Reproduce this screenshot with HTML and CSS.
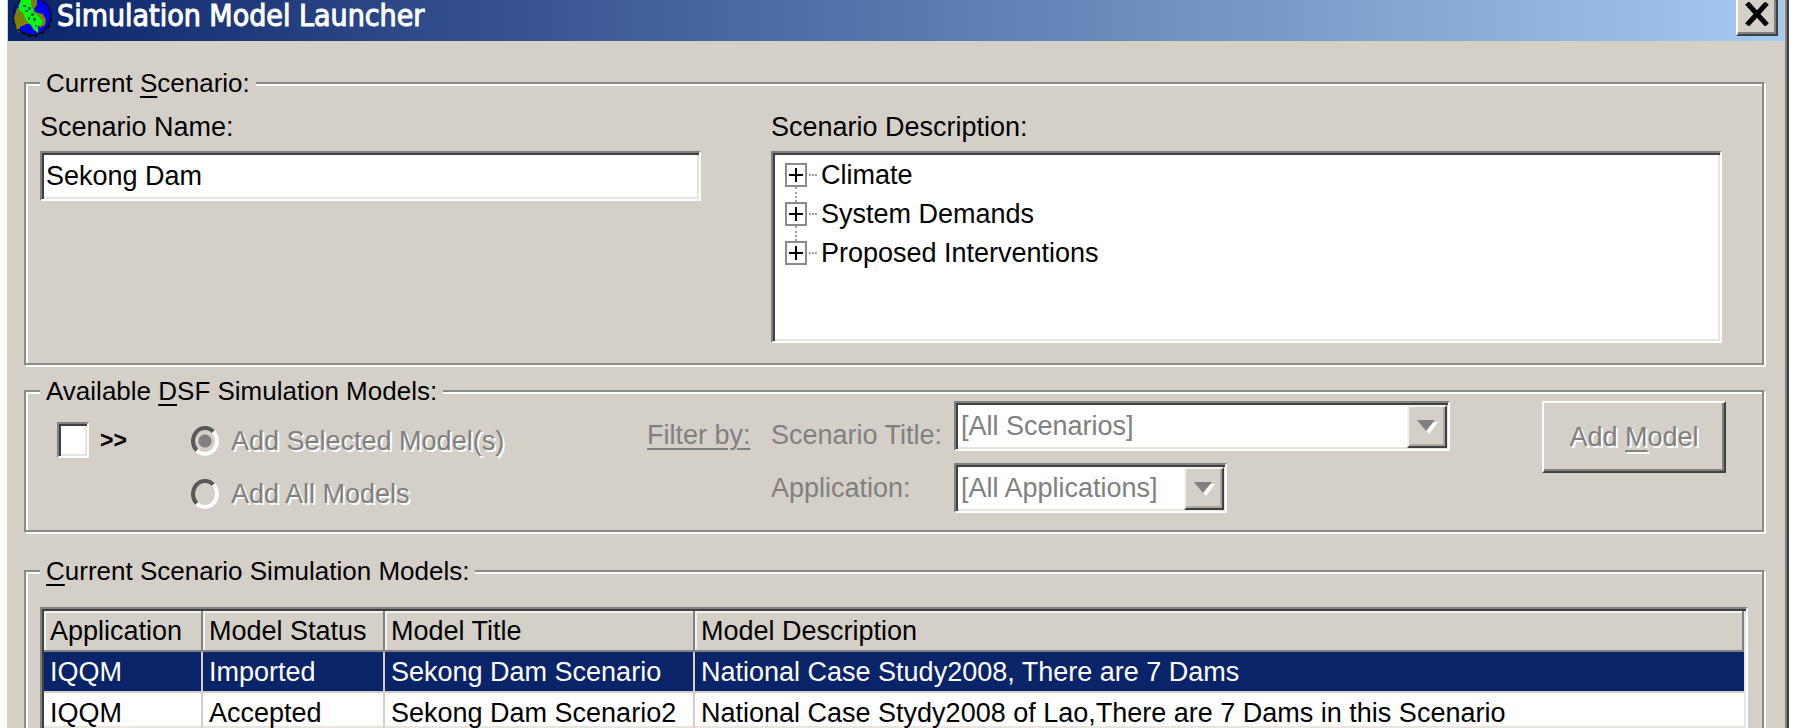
FILE: index.html
```
<!DOCTYPE html>
<html lang="en">
<head>
  <meta charset="UTF-8" />
  <meta name="viewport" content="width=device-width, initial-scale=1" />
  <title>Simulation Model Launcher</title>
  <link rel="stylesheet" href="styles.css">
</head>
<body>
  <div class="dialog">

    <!-- Title bar -->
    <header class="titlebar">
      <svg class="app-icon" viewBox="0 0 40 38" aria-hidden="true">
        <circle cx="19" cy="16" r="20" fill="#06103c" />
        <circle cx="19" cy="16" r="18" fill="#0000ff" />
        <path d="M4 8 L8 7 L19 24 L14 24 L7 27 L6 33 L3 27 L1 18 Z" fill="#808000" />
        <path d="M17 0 L24 0 L24 5 L21 9 L22 12 L30 14 L33 20 L32 25 L27 28 L18 14 L14 4 Z" fill="#808000" />
        <path d="M6 5 L8 0 L18 0 L18 5 L21 12 L26 17 L30 21 L28 25 L25 26 L25 33 L21 30 L18 25 L13 20 L10 13 L6 10 Z" fill="#00ff00" />
        <path d="M10 5h3v2h-3zM15 7h3v3h-3zM12 10h3v2h-3zM18 13h3v3h-3zM15 17h2v3h-2zM20 18h3v3h-3zM22 25h2v2h-2z" fill="#006080" />
        <path d="M9 32h3v2h-3zM15 35h3v2h-3zM21 35h3v2h-3zM28 32h3v2h-3zM34 26h3v2h-3zM37 18h2v3h-2zM5 29h2v2h-2z" fill="#000" />
      </svg>
      <h1>Simulation Model Launcher</h1>
      <button type="button" class="close" aria-label="Close">
        <svg viewBox="0 0 24 24" aria-hidden="true"><path d="M2 1 L22 23 M22 1 L2 23" stroke="#000" stroke-width="5" /></svg>
      </button>
    </header>

    <main class="content">

      <!-- Current scenario -->
      <fieldset class="group scenario">
        <legend>Current <u>S</u>cenario:</legend>
        <div class="scenario-grid">
          <div class="field">
            <label for="scenarioName">Scenario Name:</label>
            <input type="text" id="scenarioName" class="sunken" value="Sekong Dam" />
          </div>
          <div class="field">
            <span id="descLabel">Scenario Description:</span>
            <ul class="tree sunken" aria-labelledby="descLabel">
              <li><button type="button" class="expander" aria-label="Expand Climate"></button>Climate</li>
              <li><button type="button" class="expander" aria-label="Expand System Demands"></button>System Demands</li>
              <li><button type="button" class="expander" aria-label="Expand Proposed Interventions"></button>Proposed Interventions</li>
            </ul>
          </div>
        </div>
      </fieldset>

      <!-- Available models -->
      <fieldset class="group available">
        <legend>Available <u>D</u>SF Simulation Models:</legend>
        <div class="toolbar">
          <label class="toggle"><input type="checkbox" class="check sunken" /><b>&gt;&gt;</b></label>
          <div class="radios">
            <label><input type="radio" name="add" checked disabled />Add Selected Model(s)</label>
            <label><input type="radio" name="add" disabled />Add All Models</label>
          </div>
          <div class="filters">
            <u class="filter-by">Filter by:</u>
            <label class="low" for="scenarioTitle">Scenario Title:</label>
            <div class="combo sunken">
              <select id="scenarioTitle" disabled><option>[All Scenarios]</option></select>
              <span class="arrow"><svg viewBox="0 0 24 16" aria-hidden="true"><path d="M5 3h18L14 15z" fill="#fff" /><path d="M2 1h18l-9 11z" fill="#808080" /></svg></span>
            </div>
            <label class="app" for="application">Application:</label>
            <div class="combo combo-short sunken">
              <select id="application" disabled><option>[All Applications]</option></select>
              <span class="arrow"><svg viewBox="0 0 24 16" aria-hidden="true"><path d="M5 3h18L14 15z" fill="#fff" /><path d="M2 1h18l-9 11z" fill="#808080" /></svg></span>
            </div>
          </div>
          <button type="button" class="add" disabled>Add <u>M</u>odel</button>
        </div>
      </fieldset>

      <!-- Models in this scenario -->
      <fieldset class="group models">
        <legend><u>C</u>urrent Scenario Simulation Models:</legend>
        <div class="grid-box sunken">
          <table>
            <colgroup>
              <col class="col-app"><col class="col-status"><col class="col-title"><col>
            </colgroup>
            <thead>
              <tr><th>Application</th><th>Model Status</th><th>Model Title</th><th>Model Description</th></tr>
            </thead>
            <tbody>
              <tr class="selected"><td>IQQM</td><td>Imported</td><td>Sekong Dam Scenario</td><td>National Case Study2008, There are 7 Dams</td></tr>
              <tr><td>IQQM</td><td>Accepted</td><td>Sekong Dam Scenario2</td><td>National Case Stydy2008 of Lao,There are 7 Dams in this Scenario</td></tr>
            </tbody>
          </table>
        </div>
      </fieldset>

    </main>
  </div>
</body>
</html>
```
FILE: styles.css
```
:root {
  --face: #d4d0c8;
  --shadow: #808080;
  --dark: #404040;
  --light: #ffffff;
  --navy: #0a246a;
}

*, *::before, *::after { box-sizing: border-box; }

html, body {
  margin: 0;
  height: 100%;
  overflow: hidden;
  background: #fff;
}
body {
  font-family: "Liberation Sans", Arial, sans-serif;
  font-size: 27px;
  line-height: 32px;
  color: #000;
}
input, select, button { font: inherit; color: inherit; margin: 0; }
u { text-decoration-thickness: 2px; text-underline-offset: 4px; }

/* Dialog window */
.dialog {
  height: 100%;
  display: flex;
  flex-direction: column;
  margin: 0 11px 0 7px;
  background: var(--face);
  border-right: 2px solid var(--dark);
  box-shadow: inset -2px 0 0 var(--shadow);
}

/* Title bar */
.titlebar {
  flex: none;
  display: flex;
  align-items: flex-start;
  height: 41px;
  margin: 0 3px 0 1px;
  padding: 0 6px 0 5px;
  background: linear-gradient(90deg, #0a246a, #a6caf0);
}
.app-icon { width: 40px; height: 38px; }
.titlebar h1 {
  flex: 1;
  margin: 0 0 0 4px;
  font-family: "DejaVu Sans Condensed", "DejaVu Sans", sans-serif;
  font-size: 30px;
  font-weight: 400;
  line-height: 32px;
  color: #fff;
  -webkit-text-stroke: 1px #fff;
}
.close {
  display: flex;
  justify-content: center;
  width: 42px;
  height: 36px;
  padding: 2px 0 0;
  background: var(--face);
  border: solid;
  border-width: 0 2px 2px;
  border-color: var(--light) var(--dark) var(--dark) var(--light);
  box-shadow: inset -2px -2px 0 var(--shadow);
}
.close svg { width: 24px; height: 24px; }

/* Group boxes */
.content {
  flex: 1;
  min-height: 0;
  display: flex;
  flex-direction: column;
  padding: 26px 23px 0 17px;
}
.group {
  min-width: 0;
  margin: 0;
  padding: 0 14px;
  border: 2px solid #8a8a88;
  box-shadow: inset 2px 2px 0 var(--light), 2px 2px 0 var(--light);
}
.group legend {
  padding: 0 6px;
  background: var(--face);
  font-size: 26px;
}
.sunken {
  background: #fff;
  border: 2px solid;
  border-color: var(--shadow) var(--light) var(--light) var(--shadow);
  border-radius: 0;
  outline: none;
  box-shadow: inset 2px 2px 0 var(--dark), inset -2px -2px 0 #e8e5de;
}

/* Current scenario */
.scenario-grid {
  display: grid;
  grid-template-columns: 41fr 59fr;
  gap: 70px;
  padding: 12px 26px 20px 0;
}
.field {
  display: flex;
  flex-direction: column;
  gap: 8px;
}
.field input {
  width: 100%;
  height: 50px;
  padding: 0 4px;
}
.tree {
  height: 192px;
  margin: 0;
  padding: 2px 12px;
  list-style: none;
}
.tree li {
  position: relative;
  display: flex;
  align-items: center;
  gap: 14px;
  height: 39px;
}
.tree li::before {
  content: "";
  position: absolute;
  left: 24px;
  width: 8px;
  border-top: 2px dotted #a0a0a0;
}
.tree li:not(:last-child)::after {
  content: "";
  position: absolute;
  left: 10px;
  top: 32px;
  height: 15px;
  border-left: 2px dotted #a0a0a0;
}
.expander {
  width: 22px;
  height: 24px;
  padding: 0;
  border: 2px solid #8a8a8a;
  background:
    linear-gradient(#000, #000) center / 14px 2px no-repeat,
    linear-gradient(#000, #000) center / 2px 14px no-repeat,
    #fff;
}

/* Available models */
.available { margin-top: 10px; }
.toolbar {
  display: flex;
  align-items: flex-start;
  margin-top: -6px;
  padding: 0 22px 17px 17px;
}
.toggle {
  display: flex;
  align-items: center;
  gap: 11px;
  width: 134px;
  margin-top: 21px;
}
.toggle b { font-size: 23px; }
.check {
  appearance: none;
  width: 32px;
  height: 36px;
}
.radios {
  display: grid;
  gap: 21px;
  width: 456px;
  padding-top: 24px;
  color: var(--shadow);
  text-shadow: 2px 2px 0 #fff;
}
.radios label {
  display: flex;
  align-items: center;
  gap: 12px;
}
.radios input {
  appearance: none;
  width: 28px;
  height: 30px;
  border: 4px solid;
  border-color: #585858 #fff #fff #585858;
  border-radius: 50%;
}
.radios input:checked { background: radial-gradient(circle, #808080 6px, transparent 7px); }
.filters {
  display: grid;
  grid-template-columns: 124px 183px 496px;
  row-gap: 12px;
  color: var(--shadow);
}
.filter-by, .low { align-self: end; }
.app {
  grid-column: 2;
  align-self: center;
}
.combo {
  position: relative;
  height: 50px;
}
.combo-short { width: 273px; }
.combo select {
  appearance: none;
  width: 100%;
  height: 100%;
  padding: 0 44px 0 5px;
  border: 0;
  background: none;
  color: var(--shadow);
  opacity: 1;
}
.arrow {
  position: absolute;
  top: 2px;
  right: 1px;
  bottom: 1px;
  width: 40px;
  display: flex;
  align-items: center;
  justify-content: center;
  background: var(--face);
  border: 2px solid;
  border-color: #f4f2ee var(--dark) var(--dark) #f4f2ee;
  box-shadow: inset -2px -2px 0 #aaa7a0;
}
.arrow svg { width: 24px; height: 16px; }
.add {
  width: 184px;
  height: 72px;
  margin-left: auto;
  padding: 0;
  background: var(--face);
  border: 2px solid;
  border-color: var(--light) var(--dark) var(--dark) var(--light);
  box-shadow: inset -2px -2px 0 var(--shadow);
  color: var(--shadow);
  text-shadow: 2px 2px 0 #fff;
}

/* Models table */
.models {
  flex: 1;
  min-height: 0;
  display: flex;
  flex-direction: column;
  margin-top: 23px;
  border-bottom: 0;
}
.grid-box {
  flex: 1;
  min-height: 0;
  margin-top: 20px;
  padding: 2px 2px 0;
  border-bottom: 0;
  overflow: hidden;
}
table {
  width: 100%;
  table-layout: fixed;
  border-collapse: separate;
  border-spacing: 0;
}
.col-app { width: 159px; }
.col-status { width: 182px; }
.col-title { width: 310px; }
th, td {
  height: 41px;
  padding: 0 0 0 6px;
  border-right: 2px solid var(--face);
  border-bottom: 2px solid var(--face);
  font-weight: 400;
  text-align: left;
  white-space: nowrap;
}
th {
  background: var(--face);
  border-color: var(--shadow);
  box-shadow: inset 2px 2px 0 #f4f2ee;
}
td:last-child { border-right: 0; }
.selected { background: var(--navy); color: #fff; }
```
